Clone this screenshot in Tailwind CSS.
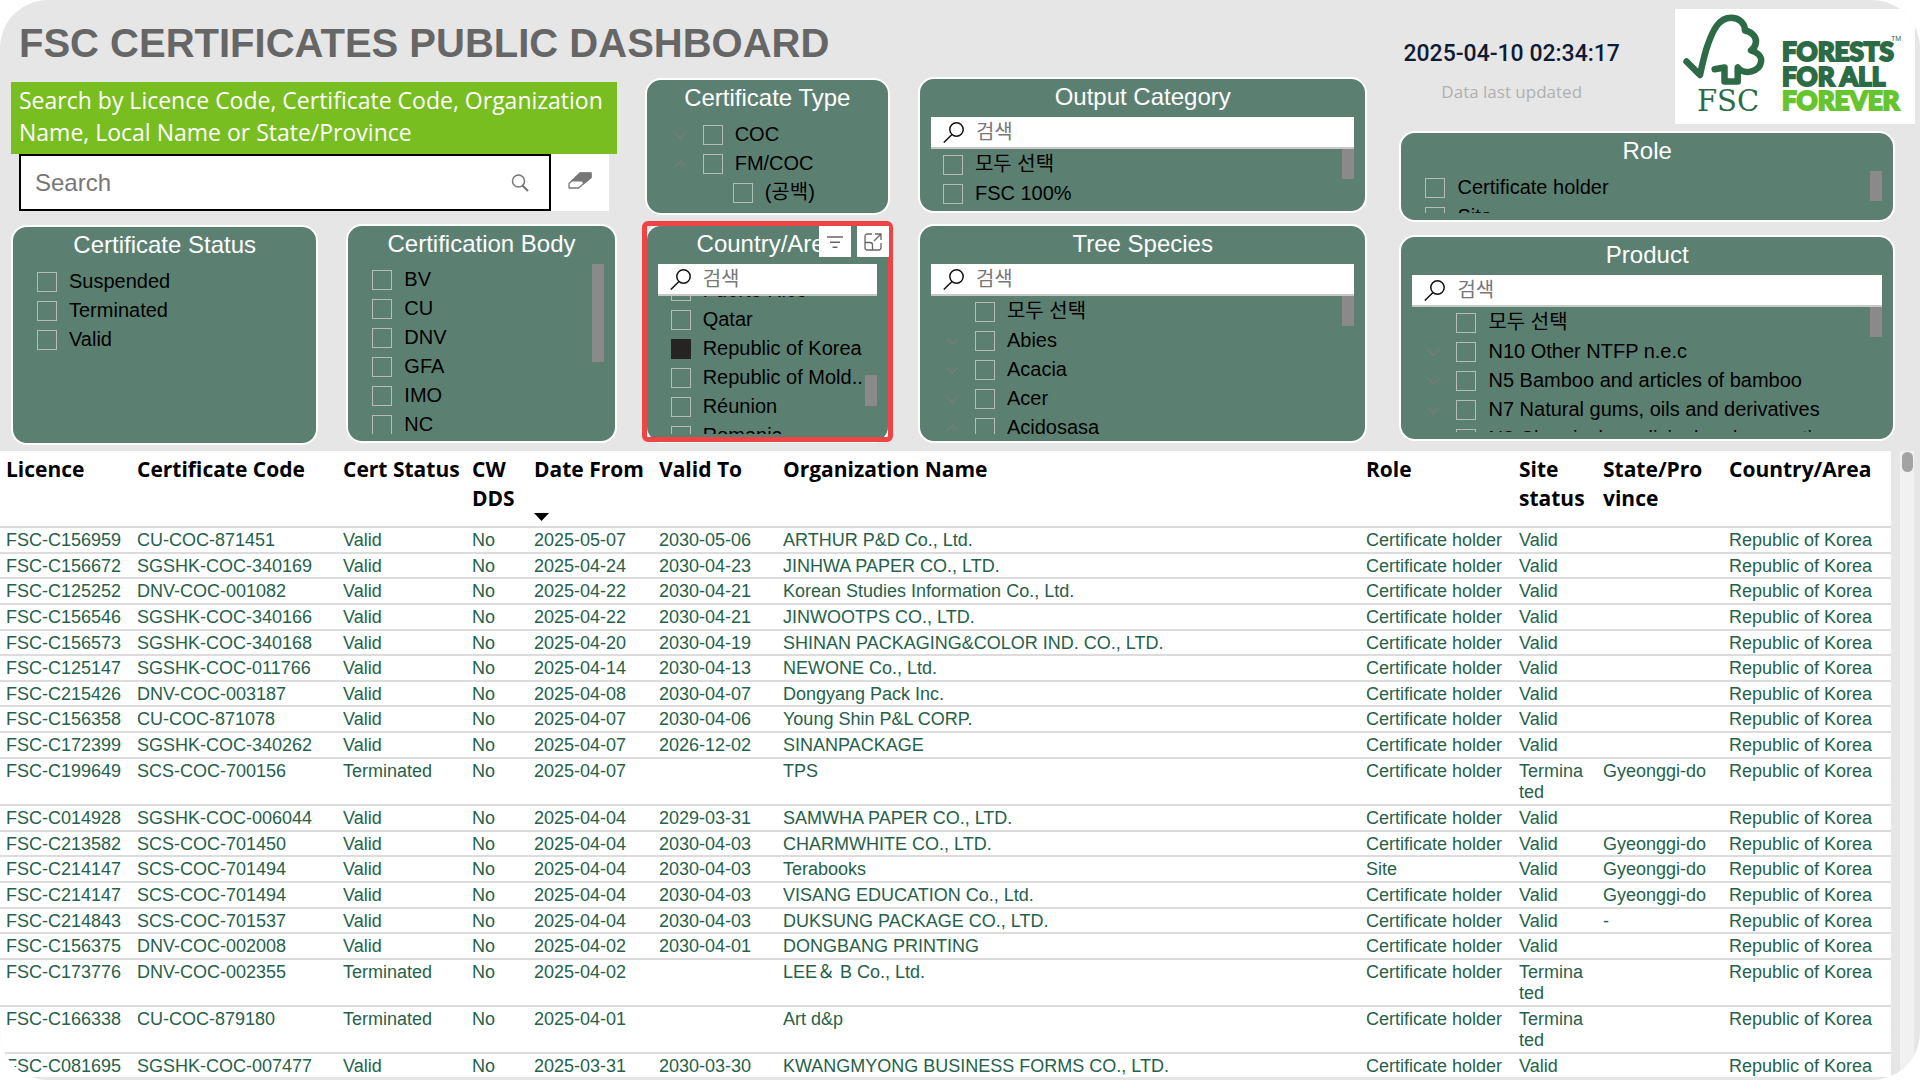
<!DOCTYPE html>
<html lang="en">
<head>
    <meta charset="UTF-8">
    <meta name="viewport" content="width=device-width, initial-scale=1.0">
    <title>FSC Certificates Public Dashboard</title>
    <script src="https://cdn.jsdelivr.net/npm/@tailwindcss/browser@4"></script>
</head>
<body class="bg-white font-['Liberation_Sans','Noto_Sans_CJK_KR',sans-serif] text-black">

    <div class="flex h-screen flex-col overflow-hidden rounded-[48px] bg-[#e6e6e6]">

        <!-- Header and slicers -->
        <div class="grid shrink-0 grid-cols-[minmax(0,1355fr)_minmax(0,499fr)] gap-7 pr-[25px] pb-[6px] pl-[11px]">
            <div>
                <header class="flex h-[77px] items-center pt-2 pl-2">
                    <h1 class="text-[40px] leading-none font-bold whitespace-nowrap text-[#666666]">FSC CERTIFICATES PUBLIC DASHBOARD</h1>
                </header>

                <div class="grid grid-cols-[minmax(0,605fr)_minmax(0,245fr)_minmax(0,449fr)] gap-7">
                    <div class="pt-[5px]">
                        <label for="search" class="block h-[72px] bg-[#78be20] pt-[2px] pl-2 font-['Open_Sans',sans-serif] text-[23px] leading-8 whitespace-nowrap text-white">Search by Licence Code, Certificate Code, Organization<br>Name, Local Name or State/Province</label>
                        <form class="mr-2 ml-2 flex h-[57px] bg-white">
                            <div class="flex flex-1 items-center border-2 border-black pr-5 pl-[14px]">
                                <input id="search" type="text" placeholder="Search" class="h-full min-w-0 flex-1 text-[24px] outline-none placeholder:text-[#777777]">
                                <svg class="size-[18px]" viewBox="0 0 18 18" fill="none" stroke="#777777" stroke-width="1.5"><circle cx="7.5" cy="7" r="6"/><path d="M11.5 11.5l5.5 5.5" stroke-width="2.2"/></svg>
                            </div>
                            <button type="button" aria-label="Clear search" class="flex w-[58px] items-center justify-center pb-1">
                                <svg class="h-[17px] w-6" viewBox="0 0 24 17"><path d="M12 1H23V5.500L10.500 16H1V11.500z" fill="#fff" stroke="#777" stroke-width="1.300" stroke-linejoin="round"/><path d="M12 .5H23.500V6L15.500 12.500L14 9.500H3z" fill="#777"/></svg>
                            </button>
                        </form>

                        <div class="mt-[13px] grid grid-cols-[minmax(0,307fr)_minmax(0,270fr)] gap-7">
                            <section class="mt-px h-[220px] rounded-2xl border-2 border-white bg-[#5b8072] pb-[7px]">
                                <h2 class="mb-1 h-9 text-center text-[24px] leading-9 text-white">Certificate Status</h2>
                                <ul id="cert-status" class="pl-6"></ul>
                            </section>
                            <section class="relative flex h-[219px] flex-col rounded-2xl border-2 border-white bg-[#5b8072] pb-[7px]">
                                <h2 class="mb-[3px] h-9 shrink-0 text-center text-[24px] leading-9 text-white">Certification Body</h2>
                                <ul id="cert-body" class="flex-1 overflow-hidden pl-6"></ul>
                                <div class="absolute top-[38px] right-[11px] h-[98px] w-3 bg-[#8a8a8a]"></div>
                            </section>
                        </div>
                    </div>

                    <div class="flex flex-col gap-[9px] pt-px">
                        <section class="h-[137px] rounded-2xl border-2 border-white bg-[#5b8072]">
                            <h2 class="mb-1 h-9 text-center text-[24px] leading-9 text-white">Certificate Type</h2>
                            <ul id="cert-type" class="pl-[27px]"></ul>
                        </section>
                        <section class="relative flex h-[219px] flex-col rounded-2xl border-2 border-white bg-[#5b8072] pb-[7px]">
                            <h2 class="mb-[2px] h-9 shrink-0 text-center text-[24px] leading-9 text-white">Country/Area</h2>
                            <label class="mx-[11px] flex h-8 shrink-0 items-center gap-3 border-b-2 border-[#c8c8c8] bg-white pl-3">
                                <svg class="size-[21px]" viewBox="0 0 21 21" fill="none" stroke="#111" stroke-width="1.500"><circle cx="13.500" cy="7.500" r="6.700"/><path d="M9 12.500L.8 20.500"/></svg>
                                <input type="text" placeholder="검색" aria-label="Search Country/Area" class="min-w-0 flex-1 text-[20px] outline-none placeholder:text-[#777777]">
                            </label>
                            <div class="flex-1 overflow-hidden"><ul id="country" class="-mt-5 pl-6"></ul></div>
                            <div class="absolute top-[149px] right-[11px] h-[31px] w-3 bg-[#8a8a8a]"></div>
                            <div class="pointer-events-none absolute -inset-x-[5px] -top-[5px] -bottom-px rounded-md border-[5px] border-[#ef4444]"></div>
                            <div class="absolute top-0 -right-px flex gap-[6px]">
                                <button type="button" aria-label="Filters" class="flex h-[31px] w-8 items-center justify-center bg-white">
                                    <svg class="h-3 w-4" viewBox="0 0 16 12" stroke="#666" stroke-width="1.400"><path d="M0 1h16M3 6.200h10M5.500 11.200h5"/></svg>
                                </button>
                                <button type="button" aria-label="Focus mode" class="flex h-[31px] w-8 items-center justify-center bg-white">
                                    <svg class="size-[18px]" viewBox="0 0 18 18" fill="none" stroke="#666" stroke-width="1.300"><path d="M8 1H3.500Q1 1 1 3.500V14.500Q1 17 3.500 17H14.500Q17 17 17 14.500V10M1 9.500H6Q8.500 9.500 8.500 12V17M11 1H17V7M17 1L10 8"/></svg>
                                </button>
                            </div>
                        </section>
                    </div>

                    <div class="flex flex-col gap-[11px]">
                        <section class="relative flex h-[136px] flex-col rounded-2xl border-2 border-white bg-[#5b8072] pb-[7px]">
                            <h2 class="mb-[2px] h-9 shrink-0 text-center text-[24px] leading-9 text-white">Output Category</h2>
                            <label class="mx-[11px] flex h-8 shrink-0 items-center gap-3 border-b-2 border-[#c8c8c8] bg-white pl-3">
                                <svg class="size-[21px]" viewBox="0 0 21 21" fill="none" stroke="#111" stroke-width="1.500"><circle cx="13.500" cy="7.500" r="6.700"/><path d="M9 12.500L.8 20.500"/></svg>
                                <input type="text" placeholder="검색" aria-label="Search Output Category" class="min-w-0 flex-1 text-[20px] outline-none placeholder:text-[#777777]">
                            </label>
                            <ul id="output-category" class="flex-1 overflow-hidden pt-px pl-[23px]"></ul>
                            <div class="absolute top-[70px] right-[11px] h-[30px] w-3 bg-[#8a8a8a]"></div>
                        </section>
                        <section class="relative flex h-[219px] flex-col rounded-2xl border-2 border-white bg-[#5b8072] pb-[7px]">
                            <h2 class="mb-[2px] h-9 shrink-0 text-center text-[24px] leading-9 text-white">Tree Species</h2>
                            <label class="mx-[11px] flex h-8 shrink-0 items-center gap-3 border-b-2 border-[#c8c8c8] bg-white pl-3">
                                <svg class="size-[21px]" viewBox="0 0 21 21" fill="none" stroke="#111" stroke-width="1.500"><circle cx="13.500" cy="7.500" r="6.700"/><path d="M9 12.500L.8 20.500"/></svg>
                                <input type="text" placeholder="검색" aria-label="Search Tree Species" class="min-w-0 flex-1 text-[20px] outline-none placeholder:text-[#777777]">
                            </label>
                            <ul id="tree-species" class="flex-1 overflow-hidden pt-px pl-[26px]"></ul>
                            <div class="absolute top-[70px] right-[11px] h-[30px] w-3 bg-[#8a8a8a]"></div>
                        </section>
                    </div>
                </div>
            </div>

            <div class="pl-1">
                <div class="-mr-5 flex h-[131px] items-start justify-between pt-[9px]">
                    <div class="flex flex-col items-center pt-[31px] pl-1">
                        <time class="font-['Roboto',sans-serif] text-[23px] leading-7 font-medium whitespace-nowrap text-[#0f1a33]">2025-04-10 02:34:17</time>
                        <p class="mt-3 font-['Open_Sans',sans-serif] text-[17px] leading-6 text-[#b0b0b0]">Data last updated</p>
                    </div>
                    <svg class="h-[115px] w-60 bg-white" viewBox="0 0 240 115" role="img" aria-label="FSC Forests For All Forever">
                        <path d="M11.500 52.500L25 66C28 52 30 43 33 35.300C38 21 44 8.700 56 8.700C64 8.700 70 14 70 21.500C77 23 81.500 28 81 33C80.500 37 79 39.500 76 41.500C83 43.500 87 48 86 53C84.500 62 70 67 62.700 58.500V72.500H49.500V58.500L39.700 60.300" fill="none" stroke="#2c6b45" stroke-width="6.500" stroke-linecap="round" stroke-linejoin="round"/>
                        <text x="22" y="102" font-family="DejaVu Serif, serif" font-size="29" fill="#2c6b45">FSC</text>
                        <g font-family="Lato, sans-serif" font-weight="900" font-size="26" stroke-width="2">
                            <text x="107" y="52" fill="#2c6b45" stroke="#2c6b45">FORESTS</text>
                            <text x="107" y="77" fill="#2c6b45" stroke="#2c6b45">FOR ALL</text>
                            <text x="107" y="101" fill="#66c430" stroke="#66c430">FOREVER</text>
                        </g>
                        <text x="216" y="32" font-family="Liberation Sans, sans-serif" font-size="7" fill="#2c6b45">TM</text>
                    </svg>
                </div>

                <section class="relative flex h-[91px] flex-col rounded-2xl border-2 border-white bg-[#5b8072] pb-[7px]">
                    <h2 class="mb-1 h-9 shrink-0 text-center text-[24px] leading-9 text-white">Role</h2>
                    <ul id="role" class="flex-1 overflow-hidden pl-6"></ul>
                    <div class="absolute top-[38px] right-[11px] h-[30px] w-3 bg-[#8a8a8a]"></div>
                </section>
                <section class="relative mt-[13px] flex h-[206px] flex-col rounded-2xl border-2 border-white bg-[#5b8072] pb-[7px]">
                    <h2 class="mb-[2px] h-9 shrink-0 text-center text-[24px] leading-9 text-white">Product</h2>
                    <label class="mx-[11px] flex h-8 shrink-0 items-center gap-3 border-b-2 border-[#c8c8c8] bg-white pl-3">
                        <svg class="size-[21px]" viewBox="0 0 21 21" fill="none" stroke="#111" stroke-width="1.500"><circle cx="13.500" cy="7.500" r="6.700"/><path d="M9 12.500L.8 20.500"/></svg>
                        <input type="text" placeholder="검색" aria-label="Search Product" class="min-w-0 flex-1 text-[20px] outline-none placeholder:text-[#777777]">
                    </label>
                    <ul id="product" class="flex-1 overflow-hidden pt-px pl-[26px]"></ul>
                    <div class="absolute top-[70px] right-[11px] h-[30px] w-3 bg-[#8a8a8a]"></div>
                </section>
            </div>
        </div>

        <!-- Results -->
        <div class="flex min-h-0 flex-1 pb-[3px]">
            <div class="flex-1 overflow-hidden bg-white">
                <table class="h-[calc(100%+3px)] w-full table-fixed border-collapse text-left text-[18px] leading-[21px] text-[#25614a]">
                    <colgroup>
                        <col class="w-[129px]"><col class="w-[206px]"><col class="w-[129px]"><col class="w-[62px]"><col class="w-[125px]"><col class="w-[124px]"><col><col class="w-[153px]"><col class="w-[84px]"><col class="w-[126px]"><col class="w-[170px]">
                    </colgroup>
                    <thead>
                        <tr class="h-[76px] border-b-2 border-[#dcdcdc] align-top font-['Open_Sans',sans-serif] text-[21px] leading-[29px] text-black [&>th]:pt-1 [&>th]:pl-2 [&>th:first-child]:pl-[6px]">
                            <th>Licence</th>
                            <th class="whitespace-nowrap">Certificate Code</th>
                            <th class="whitespace-nowrap">Cert Status</th>
                            <th>CW DDS</th>
                            <th class="whitespace-nowrap" aria-sort="descending">Date From
                                <svg class="mt-[29px] h-2 w-[15px]" viewBox="0 0 15 8"><path d="M0 0h15L7.500 8z"/></svg>
                            </th>
                            <th class="whitespace-nowrap">Valid To</th>
                            <th>Organization Name</th>
                            <th>Role</th>
                            <th>Site status</th>
                            <th>State/Pro<br>vince</th>
                            <th class="whitespace-nowrap">Country/Area</th>
                        </tr>
                    </thead>
                    <tbody id="rows"></tbody>
                </table>
            </div>
            <div class="mr-[6px] ml-[9px] w-[14px] bg-[#f1f1f1] pt-px">
                <div class="mx-auto h-5 w-[11px] rounded-full bg-[#a3a3a3]"></div>
            </div>
        </div>
    </div>

    <script>
        // Slicer items: [label, chevron, checked]
        const slicers = {
            'cert-status': [['Suspended'], ['Terminated'], ['Valid']],
            'cert-body': [['BV'], ['CU'], ['DNV'], ['GFA'], ['IMO'], ['NC']],
            'cert-type': [['COC', 'down'], ['FM/COC', 'up'], ['(공백)', 'child']],
            'country': [['Puerto Rico'], ['Qatar'], ['Republic of Korea', '', true], ['Republic of Mold..'], ['Réunion'], ['Romania']],
            'output-category': [['모두 선택'], ['FSC 100%']],
            'tree-species': [['모두 선택', 'none'], ['Abies', 'down'], ['Acacia', 'down'], ['Acer', 'down'], ['Acidosasa', 'up']],
            'role': [['Certificate holder'], ['Site']],
            'product': [['모두 선택', 'none'], ['N10 Other NTFP n.e.c', 'down'], ['N5 Bamboo and articles of bamboo', 'down'], ['N7 Natural gums, oils and derivatives', 'down'], ['N8 Chemical, medicinal and cosmetic', 'down']],
        };

        const chevrons = {
            down: '<svg class="mr-4 h-2 w-[13px]" viewBox="0 0 13 8" fill="none" stroke="#767c79" stroke-width="1.4"><path d="M.5 1l6 6 6-6"/></svg>',
            up: '<svg class="mr-4 h-2 w-[13px]" viewBox="0 0 13 8" fill="none" stroke="#767c79" stroke-width="1.4"><path d="M.5 7l6-6 6 6"/></svg>',
            none: '<span class="w-[29px]"></span>',
            child: '<span class="w-[59px]"></span>',
        };

        for (const [id, items] of Object.entries(slicers)) {
            document.getElementById(id).innerHTML = items.map(([label, chevron, checked]) => `
                <li class="flex h-[29px] items-center">
                    ${chevrons[chevron] || ''}
                    <label class="flex items-center gap-3 text-[20px] leading-[29px] whitespace-nowrap">
                        <input type="checkbox" ${checked ? 'checked' : ''} class="size-5 shrink-0 appearance-none border border-[#b5bdb9] checked:border-[#252423] checked:bg-[#252423]">
                        ${label}
                    </label>
                </li>`).join('');
        }

        // Licence, code, status, from, to, organization, role, site status, state
        const holder = 'Certificate holder';
        const certificates = [
            ['FSC-C156959', 'CU-COC-871451', 'Valid', '2025-05-07', '2030-05-06', 'ARTHUR P&amp;D Co., Ltd.', holder, 'Valid', ''],
            ['FSC-C156672', 'SGSHK-COC-340169', 'Valid', '2025-04-24', '2030-04-23', 'JINHWA PAPER CO., LTD.', holder, 'Valid', ''],
            ['FSC-C125252', 'DNV-COC-001082', 'Valid', '2025-04-22', '2030-04-21', 'Korean Studies Information Co., Ltd.', holder, 'Valid', ''],
            ['FSC-C156546', 'SGSHK-COC-340166', 'Valid', '2025-04-22', '2030-04-21', 'JINWOOTPS CO., LTD.', holder, 'Valid', ''],
            ['FSC-C156573', 'SGSHK-COC-340168', 'Valid', '2025-04-20', '2030-04-19', 'SHINAN PACKAGING&amp;COLOR IND. CO., LTD.', holder, 'Valid', ''],
            ['FSC-C125147', 'SGSHK-COC-011766', 'Valid', '2025-04-14', '2030-04-13', 'NEWONE Co., Ltd.', holder, 'Valid', ''],
            ['FSC-C215426', 'DNV-COC-003187', 'Valid', '2025-04-08', '2030-04-07', 'Dongyang Pack Inc.', holder, 'Valid', ''],
            ['FSC-C156358', 'CU-COC-871078', 'Valid', '2025-04-07', '2030-04-06', 'Young Shin P&amp;L CORP.', holder, 'Valid', ''],
            ['FSC-C172399', 'SGSHK-COC-340262', 'Valid', '2025-04-07', '2026-12-02', 'SINANPACKAGE', holder, 'Valid', ''],
            ['FSC-C199649', 'SCS-COC-700156', 'Terminated', '2025-04-07', '', 'TPS', holder, 'Terminated', 'Gyeonggi-do'],
            ['FSC-C014928', 'SGSHK-COC-006044', 'Valid', '2025-04-04', '2029-03-31', 'SAMWHA PAPER CO., LTD.', holder, 'Valid', ''],
            ['FSC-C213582', 'SCS-COC-701450', 'Valid', '2025-04-04', '2030-04-03', 'CHARMWHITE CO., LTD.', holder, 'Valid', 'Gyeonggi-do'],
            ['FSC-C214147', 'SCS-COC-701494', 'Valid', '2025-04-04', '2030-04-03', 'Terabooks', 'Site', 'Valid', 'Gyeonggi-do'],
            ['FSC-C214147', 'SCS-COC-701494', 'Valid', '2025-04-04', '2030-04-03', 'VISANG EDUCATION Co., Ltd.', holder, 'Valid', 'Gyeonggi-do'],
            ['FSC-C214843', 'SCS-COC-701537', 'Valid', '2025-04-04', '2030-04-03', 'DUKSUNG PACKAGE CO., LTD.', holder, 'Valid', '-'],
            ['FSC-C156375', 'DNV-COC-002008', 'Valid', '2025-04-02', '2030-04-01', 'DONGBANG PRINTING', holder, 'Valid', ''],
            ['FSC-C173776', 'DNV-COC-002355', 'Terminated', '2025-04-02', '', 'LEE＆ B Co., Ltd.', holder, 'Terminated', ''],
            ['FSC-C166338', 'CU-COC-879180', 'Terminated', '2025-04-01', '', 'Art d&amp;p', holder, 'Terminated', ''],
            ['FSC-C081695', 'SGSHK-COC-007477', 'Valid', '2025-03-31', '2030-03-30', 'KWANGMYONG BUSINESS FORMS CO., LTD.', holder, 'Valid', ''],
        ];

        document.getElementById('rows').innerHTML = certificates.map(([licence, code, status, from, to, org, role, site, state]) => `
            <tr class="border-b-2 border-[#dcdcdc] align-top whitespace-nowrap [&>td]:pt-[2px] [&>td]:pl-2 [&>td:first-child]:pl-[6px]">
                <td>${licence}</td><td>${code}</td><td>${status}</td><td>No</td><td>${from}</td><td>${to}</td><td>${org}</td><td>${role}</td>
                <td class="pr-2 break-words whitespace-normal">${site}</td><td>${state}</td><td>Republic of Korea</td>
            </tr>`).join('');
    </script>
</body>
</html>
